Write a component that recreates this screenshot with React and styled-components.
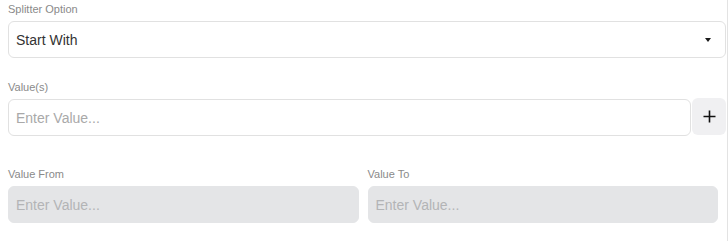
import React from "react";
import styled, { createGlobalStyle } from "styled-components";

const Global = createGlobalStyle`
  html, body { margin: 0; padding: 0; background: #ffffff; }
  body { font-family: "Liberation Sans", Arial, sans-serif; }
  * { box-sizing: border-box; }
`;

const Panel = styled.div`
  width: 728px;
  height: 241px;
  padding: 3px 1px 0 8px;
  border-right: 1px solid #e3e3e3;
  display: flex;
  flex-direction: column;
`;

const Field = styled.div`
  display: flex;
  flex-direction: column;
  margin-top: ${(p) => p.$mt || 0}px;
  min-width: 0;
`;

const Label = styled.div`
  font-size: 11px;
  line-height: 13px;
  color: #8a8a8a;
  margin-bottom: 5px;
  white-space: nowrap;
`;

const Box = styled.div`
  height: 37px;
  flex: 1 1 auto;
  border: 1px solid ${(p) => (p.$disabled ? "#e4e5e7" : "#e1e1e1")};
  background: ${(p) => (p.$disabled ? "#e4e5e7" : "#ffffff")};
  border-radius: 6px;
  display: flex;
  align-items: center;
  padding: 0 7px;
  font-size: 14px;
  color: ${(p) => (p.$placeholder ? (p.$disabled ? "#b3b4b6" : "#a9a9a9") : "#333333")};
  min-width: 0;
`;

const SelectBox = styled(Box)`
  justify-content: space-between;
  padding-right: 14px;
`;

const Caret = styled.span`
  width: 0;
  height: 0;
  margin-top: 1px;
  border-left: 3.5px solid transparent;
  border-right: 3.5px solid transparent;
  border-top: 4.5px solid #1a1a1a;
`;

const InputRow = styled.div`
  display: flex;
  align-items: flex-start;
  gap: 1px;
`;

const AddButton = styled.button`
  flex: none;
  width: 34px;
  height: 37px;
  margin-top: -1px;
  border: none;
  border-radius: 6px;
  background: #f0f0f2;
  display: flex;
  align-items: center;
  justify-content: center;
  padding: 0;
  color: #111;
`;

const Range = styled.div`
  display: grid;
  grid-template-columns: 1fr 1fr;
  gap: 9px;
  margin-right: 8px;
  margin-top: 32px;
`;

export default function App() {
  return (
    <>
      <Global />
      <Panel>
        <Field>
          <Label>Splitter Option</Label>
          <SelectBox>
            <span>Start With</span>
            <Caret />
          </SelectBox>
        </Field>
        <Field $mt={23}>
          <Label>Value(s)</Label>
          <InputRow>
            <Box $placeholder>Enter Value...</Box>
            <AddButton aria-label="add">
              <svg width="13" height="13" viewBox="0 0 13 13">
                <path d="M6.5 0.5v12M0.5 6.5h12" stroke="#111" strokeWidth="1.6" fill="none" />
              </svg>
            </AddButton>
          </InputRow>
        </Field>
        <Range>
          <Field>
            <Label>Value From</Label>
            <Box $placeholder $disabled>Enter Value...</Box>
          </Field>
          <Field>
            <Label>Value To</Label>
            <Box $placeholder $disabled>Enter Value...</Box>
          </Field>
        </Range>
      </Panel>
    </>
  );
}
